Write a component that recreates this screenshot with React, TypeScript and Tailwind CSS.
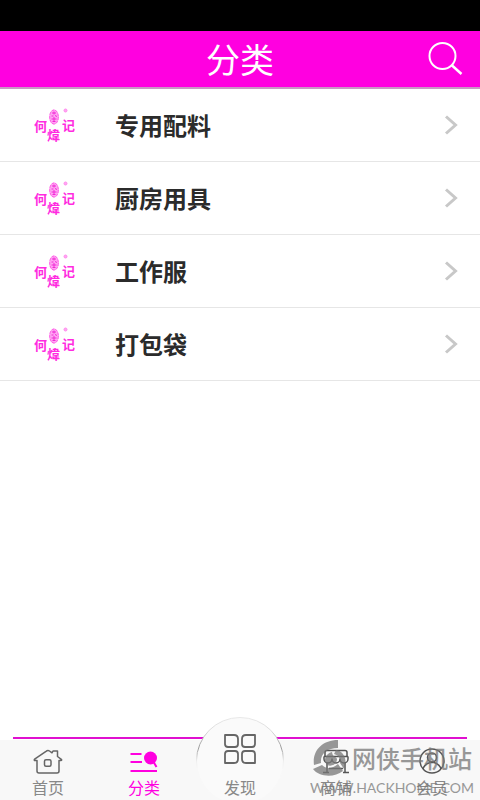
import { ReactNode } from "react";

const categories = ["专用配料", "厨房用具", "工作服", "打包袋"];

function BrandLogo() {
  return (
    <svg
      viewBox="0 0 44 36"
      className="w-11 h-9 shrink-0"
      fill="#ff2be0"
      role="img"
      aria-label="何煒记"
    >
      <ellipse cx="21" cy="10" rx="4.8" ry="7.5" fill="#ffa6f2" />
      <ellipse
        cx="21"
        cy="10"
        rx="4.3"
        ry="7"
        fill="none"
        stroke="#ff5ce8"
        strokeDasharray="3 1"
      />
      <path
        d="M19 6h4M18.5 9h2M22 8.5l2 1M18.5 12h5M19.5 14.5h3M21 4.5v3M21 10v5"
        stroke="#f02bd6"
        strokeWidth="1"
        fill="none"
      />
      <circle cx="32.5" cy="3.5" r="1.5" fill="#ffa6f2" stroke="#ff8aee" />
      <g
        fontFamily="'Noto Sans CJK SC', sans-serif"
        fontSize="13"
        fontWeight="700"
      >
        <text x="1" y="24">何</text>
        <text x="14" y="33">煒</text>
        <text x="29" y="23">记</text>
      </g>
    </svg>
  );
}

function CategoryRow({ name }: { name: string }) {
  return (
    <li className="border-b border-[#e6e6e6]">
      <a href="#" className="flex items-center h-[72px] pl-[33px] pr-[22px]">
        <BrandLogo />
        <span className="ml-[38px] flex-1 text-2xl font-bold text-[#2b2b2b]">
          {name}
        </span>
        <svg
          viewBox="0 0 14 20"
          className="w-3.5 h-5"
          fill="none"
          stroke="#c8c8c8"
          strokeWidth="3"
        >
          <path d="M2 1.5L11.5 10L2 18.5" />
        </svg>
      </a>
    </li>
  );
}

function HomeIcon() {
  return (
    <svg viewBox="0 0 30 26" className="w-[30px] h-[26px]" fill="none" stroke="#666" strokeWidth="1.5" strokeLinejoin="round">
      <path d="M4 12.5H1.5C1 12 1.3 11.3 2 10.8L13 3.3C14 2.5 15.5 2.3 16.5 3L19 4.8L20 3H24.5V8.5L28.3 11.3C29 12 28.5 12.5 28 12.5H26V23Q26 25 24 25H6Q4 25 4 23Z" />
      <rect x="11.5" y="11.8" width="6.5" height="6.5" rx="1.5" />
    </svg>
  );
}

function CategoryIcon() {
  return (
    <svg viewBox="0 0 30 26" className="w-[30px] h-[26px]" fill="none" stroke="#ff00e0" strokeWidth="2">
      <path d="M1.5 6H12.5M1.5 14H13M1.5 23H28" />
      <circle cx="21.5" cy="10" r="6.5" fill="#ff00e0" stroke="none" />
      <path d="M24 13L27.5 19" />
    </svg>
  );
}

function DiscoverIcon() {
  return (
    <svg viewBox="0 0 34 32" className="w-[34px] h-8" fill="none" stroke="#666" strokeWidth="1.8" strokeLinejoin="round">
      <path d="M2 2H11Q15 2 15 6V11Q15 14 12 14H5Q2 14 2 11Z" />
      <path d="M32 2H23Q19 2 19 6V11Q19 14 22 14H29Q32 14 32 11Z" />
      <path d="M2 30H11Q15 30 15 26V21Q15 18 12 18H5Q2 18 2 21Z" />
      <path d="M32 30H23Q19 30 19 26V21Q19 18 22 18H29Q32 18 32 21Z" />
    </svg>
  );
}

function ShopIcon() {
  return (
    <svg viewBox="0 0 30 26" className="w-[30px] h-[26px]" fill="none" stroke="#555" strokeWidth="1.5" strokeLinejoin="round">
      <path d="M6 2.5H24Q26 2.5 26 4.5V8L27 9V11A3.8 3.8 0 0 1 19 11A3.8 3.8 0 0 1 11 11A3.8 3.8 0 0 1 3 11V9L4 8V4.5Q4 2.5 6 2.5Z" />
      <path d="M3.5 8.5H26.5M6 14.5V24M24 14.5V24M2 24.5H8M22 24.5H28M8 20.5H22" />
    </svg>
  );
}

function MemberIcon() {
  return (
    <svg viewBox="0 0 30 26" className="w-[30px] h-[26px]" fill="none" stroke="#555" strokeWidth="1.5">
      <circle cx="15" cy="13" r="12" />
      <circle cx="15" cy="9.5" r="4.5" />
      <path d="M6 21C7 16.5 10.5 15.5 13 14.5H17C20 15.5 23 16.5 24 21" />
    </svg>
  );
}

function NavItem({
  label,
  icon,
  active,
}: {
  label: string;
  icon: ReactNode;
  active?: boolean;
}) {
  return (
    <a
      href="#"
      className={`flex flex-col items-center justify-end pb-[3px] text-base leading-5 ${
        active ? "text-[#ff00e0]" : "text-[#888]"
      }`}
    >
      <span className="flex items-center h-8">{icon}</span>
      {label}
    </a>
  );
}

function DiscoverItem() {
  return (
    <a
      href="#"
      className="relative flex flex-col items-center justify-end pb-[3px] text-base leading-5 text-[#888]"
    >
      <svg
        viewBox="0 0 90 84"
        className="absolute bottom-0 w-[90px] h-[84px]"
        fill="none"
      >
        <defs>
          <linearGradient id="rim" x1="0" y1="0" x2="0" y2="1">
            <stop offset="0" stopColor="#e8e8e8" />
            <stop offset="0.15" stopColor="#dcdcdc" />
            <stop offset="0.35" stopColor="#999999" />
            <stop offset="0.5" stopColor="#eeeeee" />
            <stop offset="0.6" stopColor="#f8f8f8" />
          </linearGradient>
        </defs>
        <circle cx="45" cy="45" r="43.5" fill="#fafafa" stroke="url(#rim)" />
      </svg>
      <span className="relative flex items-center h-8 mb-3">
        <DiscoverIcon />
      </span>
      <span className="relative">发现</span>
    </a>
  );
}

function Watermark() {
  return (
    <div className="absolute right-1.5 bottom-0 flex flex-col items-end text-[#777] opacity-75 pointer-events-none">
      <div className="flex items-center gap-1 pr-0.5">
        <svg viewBox="0 0 36 36" className="w-9 h-9" fill="currentColor">
          <path d="M26 0C10 0 0 11 2 25L9 23C8 14 15 8 26 8Z" />
          <path d="M1 29C7 37 22 38 31 31L26 24C20 29 14 29 10 25Z" />
          <path d="M24 10C32 11 36 20 32 29L28 23C29 18 26 15 22 14Z" />
          <path d="M20 12C13 14 11 21 15 25C20 27 25 24 25 19C24 16 21 18 20 12Z" />
        </svg>
        <span className="text-2xl leading-9 font-medium">网侠手机站</span>
      </div>
      <span className="text-sm leading-6 font-[Lato,sans-serif]">
        WWW.HACKHOME.COM
      </span>
    </div>
  );
}

export default function App() {
  return (
    <div className="relative flex flex-col min-h-screen bg-white font-['Noto_Sans_CJK_SC',sans-serif]">
      <div className="h-[31px] bg-black" />
      <header className="grid grid-cols-[1fr_auto_1fr] items-center h-[58px] px-4 bg-[#ff00e0] border-b-2 border-[#c99ac4]">
        <h1 className="col-start-2 text-[34px] leading-10 text-white">分类</h1>
        <button type="button" aria-label="搜索" className="justify-self-end">
          <svg
            viewBox="0 0 36 34"
            className="w-9 h-[34px]"
            fill="none"
            stroke="white"
            strokeWidth="2"
          >
            <circle cx="14.5" cy="14" r="13" />
            <path d="M23.5 23L33.5 32" strokeWidth="2.5" />
          </svg>
        </button>
      </header>
      <main className="flex-1">
        <ul>
          {categories.map((name) => (
            <CategoryRow key={name} name={name} />
          ))}
        </ul>
      </main>
      <footer>
        <div className="mx-[13px] mb-px h-0.5 bg-[#e010d0]" />
        <nav className="grid grid-cols-5 grid-rows-[60px] bg-[#f8f8f8]">
          <NavItem label="首页" icon={<HomeIcon />} />
          <NavItem label="分类" icon={<CategoryIcon />} active />
          <DiscoverItem />
          <NavItem label="商铺" icon={<ShopIcon />} />
          <NavItem label="会员" icon={<MemberIcon />} />
        </nav>
      </footer>
      <Watermark />
    </div>
  );
}
